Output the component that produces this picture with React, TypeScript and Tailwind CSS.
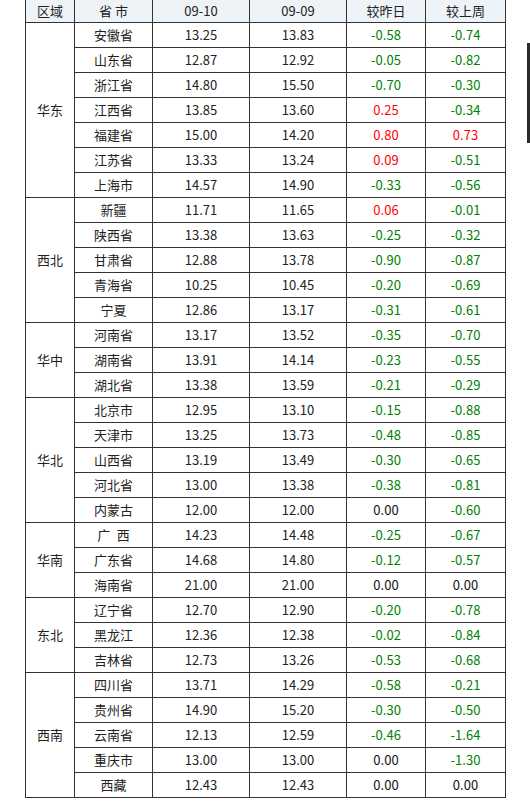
import React from "react";

type Row = [string, string, string, string, string];

interface Group {
  region: string;
  rows: Row[];
}

const groups: Group[] = [
  {
    region: "华东",
    rows: [
      ["安徽省", "13.25", "13.83", "-0.58", "-0.74"],
      ["山东省", "12.87", "12.92", "-0.05", "-0.82"],
      ["浙江省", "14.80", "15.50", "-0.70", "-0.30"],
      ["江西省", "13.85", "13.60", "0.25", "-0.34"],
      ["福建省", "15.00", "14.20", "0.80", "0.73"],
      ["江苏省", "13.33", "13.24", "0.09", "-0.51"],
      ["上海市", "14.57", "14.90", "-0.33", "-0.56"],
    ],
  },
  {
    region: "西北",
    rows: [
      ["新疆", "11.71", "11.65", "0.06", "-0.01"],
      ["陕西省", "13.38", "13.63", "-0.25", "-0.32"],
      ["甘肃省", "12.88", "13.78", "-0.90", "-0.87"],
      ["青海省", "10.25", "10.45", "-0.20", "-0.69"],
      ["宁夏", "12.86", "13.17", "-0.31", "-0.61"],
    ],
  },
  {
    region: "华中",
    rows: [
      ["河南省", "13.17", "13.52", "-0.35", "-0.70"],
      ["湖南省", "13.91", "14.14", "-0.23", "-0.55"],
      ["湖北省", "13.38", "13.59", "-0.21", "-0.29"],
    ],
  },
  {
    region: "华北",
    rows: [
      ["北京市", "12.95", "13.10", "-0.15", "-0.88"],
      ["天津市", "13.25", "13.73", "-0.48", "-0.85"],
      ["山西省", "13.19", "13.49", "-0.30", "-0.65"],
      ["河北省", "13.00", "13.38", "-0.38", "-0.81"],
      ["内蒙古", "12.00", "12.00", "0.00", "-0.60"],
    ],
  },
  {
    region: "华南",
    rows: [
      ["广\u2002西", "14.23", "14.48", "-0.25", "-0.67"],
      ["广东省", "14.68", "14.80", "-0.12", "-0.57"],
      ["海南省", "21.00", "21.00", "0.00", "0.00"],
    ],
  },
  {
    region: "东北",
    rows: [
      ["辽宁省", "12.70", "12.90", "-0.20", "-0.78"],
      ["黑龙江", "12.36", "12.38", "-0.02", "-0.84"],
      ["吉林省", "12.73", "13.26", "-0.53", "-0.68"],
    ],
  },
  {
    region: "西南",
    rows: [
      ["四川省", "13.71", "14.29", "-0.58", "-0.21"],
      ["贵州省", "14.90", "15.20", "-0.30", "-0.50"],
      ["云南省", "12.13", "12.59", "-0.46", "-1.64"],
      ["重庆市", "13.00", "13.00", "0.00", "-1.30"],
      ["西藏", "12.43", "12.43", "0.00", "0.00"],
    ],
  },
];

function changeColor(v: string) {
  const n = parseFloat(v);
  if (n < 0) return "text-[#008000]";
  if (n > 0) return "text-[#ff0000]";
  return "text-[#111]";
}

const cell = "border border-[#333] text-center p-0 font-normal";

export default function App() {
  return (
    <div className="relative w-[530px] h-[810px] bg-white overflow-hidden font-['SimSun','Noto_Sans_CJK_SC',sans-serif] text-[13px] text-[#222] leading-none">
      <table className="ml-[25px] border-collapse table-fixed w-[480px]">
        <colgroup>
          <col className="w-[49px]" />
          <col className="w-[78px]" />
          <col className="w-[97px]" />
          <col className="w-[97px]" />
          <col className="w-[79px]" />
          <col className="w-[80px]" />
        </colgroup>
        <thead>
          <tr className="h-[22px] bg-[#eef3f7]">
            <th className={`${cell} border-t-0`}>区域</th>
            <th className={`${cell} border-t-0`}>省 市</th>
            <th className={`${cell} border-t-0`}>09-10</th>
            <th className={`${cell} border-t-0`}>09-09</th>
            <th className={`${cell} border-t-0`}>较昨日</th>
            <th className={`${cell} border-t-0`}>较上周</th>
          </tr>
        </thead>
        <tbody>
          {groups.map((g) =>
            g.rows.map((r, i) => (
              <tr key={g.region + r[0]} className="h-[25px]">
                {i === 0 && (
                  <td className={cell} rowSpan={g.rows.length}>
                    {g.region}
                  </td>
                )}
                <td className={cell}>{r[0]}</td>
                <td className={cell}>{r[1]}</td>
                <td className={cell}>{r[2]}</td>
                <td className={`${cell} ${changeColor(r[3])}`}>{r[3]}</td>
                <td className={`${cell} ${changeColor(r[4])}`}>{r[4]}</td>
              </tr>
            ))
          )}
        </tbody>
      </table>
      {/* scrollbar thumb */}
      <div className="absolute right-0 top-[43px] w-[3px] h-[100px] bg-[#2b2b2b]" />
    </div>
  );
}
